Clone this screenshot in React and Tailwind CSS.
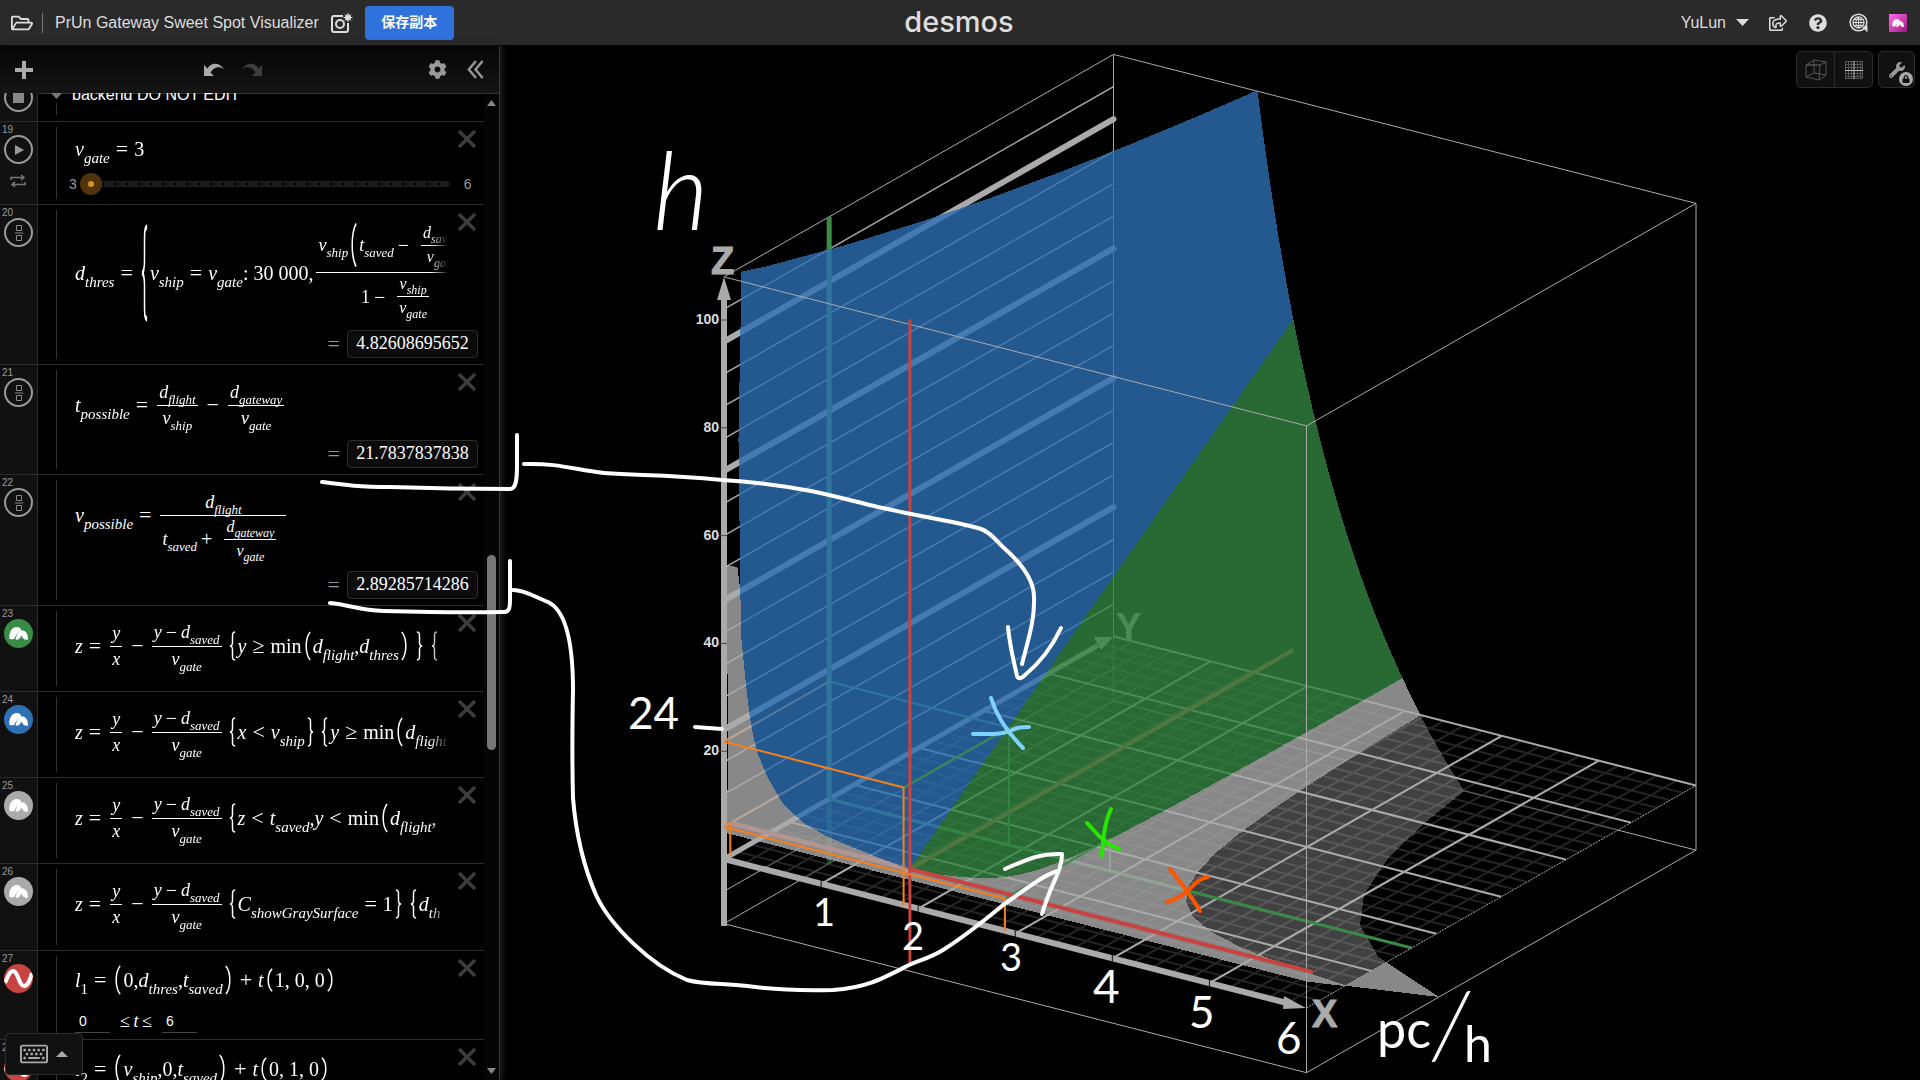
import React from "react";
import { FaRegFolderOpen, FaRegShareSquare, FaQuestionCircle, FaCog, FaRegKeyboard, FaWrench, FaLock } from "react-icons/fa";

/* ---------- math typesetting ---------- */

const SIZES = {
  lg: { main: "text-[20px]", sub: "text-[15px] align-[-7px]" },
  md: { main: "text-[18px]", sub: "text-[13px] align-[-6px]" },
  sm: { main: "text-[16px]", sub: "text-[12px] align-[-5px]" },
};

function V({ v, sub, size = "lg", upright }) {
  return (
    <span className={"whitespace-nowrap leading-none italic " + SIZES[size].main}>
      {v}
      {sub && <span className={"leading-[0] " + (upright ? "not-italic " : "") + SIZES[size].sub}>{sub}</span>}
    </span>
  );
}

function N({ children, size = "lg" }) {
  return <span className={"whitespace-pre leading-none " + SIZES[size].main}>{children}</span>;
}

function Op({ children, size = "lg" }) {
  const s = { lg: "mx-[6px] text-[22px]", md: "mx-1 text-[20px]", sm: "mx-1 text-[18px]" }[size];
  return <span className={"leading-none " + s}>{children}</span>;
}

function Frac({ top, bottom, className = "" }) {
  return (
    <span className={"mx-2 inline-grid grid-rows-[1fr_1px_1fr] justify-items-center " + className}>
      <span className="flex items-center self-end px-[2px] pb-1">{top}</span>
      <span className="w-full bg-white" />
      <span className="flex items-center self-start px-[2px] pt-[3px]">{bottom}</span>
    </span>
  );
}

const DELIMS = {
  "(": "M7 1C1 8 1 24 7 31",
  ")": "M1 1C7 8 7 24 1 31",
  "{": "M7 1C4 1 4 3 4 6V12C4 14 3 16 1 16C3 16 4 18 4 20V26C4 29 4 31 7 31",
  "}": "M1 1C4 1 4 3 4 6V12C4 14 5 16 7 16C5 16 4 18 4 20V26C4 29 4 31 1 31",
};

function Delim({ type, className = "h-[30px]" }) {
  return (
    <svg viewBox="0 0 8 32" preserveAspectRatio="none" className={"mx-[2px] w-[7px] shrink-0 " + className}>
      <path d={DELIMS[type]} fill="none" stroke="#fff" strokeWidth="1.7" />
    </svg>
  );
}

/* ---------- expression list ---------- */

function SurfaceGlyph({ className }) {
  return (
    <svg viewBox="0 0 29 29" className={className}>
      <path d="M5.500 20C4.500 13 8 8 12.500 8C15.500 8 17 9.500 17.500 11.500C14 13 12 16 10.500 19.500C9 20.500 7 20.500 5.500 20Z" fill="#fff" />
      <path d="M12.500 17C14 13 16 11.500 19 11.500C22.500 12 24 16 24 20.500C21 21.500 19 20 17.500 16.500C16 20 13.500 21.500 11.500 20.500Z" fill="#fff" />
    </svg>
  );
}

function RowIcon({ kind }) {
  const base = "flex h-[29px] w-[29px] items-center justify-center overflow-hidden rounded-full ";
  const ring = base + "border-2 border-[#999]";
  if (kind === "folder")
    return <button aria-label="Folder visibility" className={ring}><span className="h-[10px] w-[11px] bg-[#888]" /></button>;
  if (kind === "play")
    return (
      <button aria-label="Play slider" className={ring}>
        <svg viewBox="0 0 10 10" className="ml-[2px] h-[10px] w-[10px]"><path d="M0 0L9 5L0 10Z" fill="#999" /></svg>
      </button>
    );
  if (kind === "frac")
    return (
      <button aria-label="Show as fraction" className={ring}>
        <svg viewBox="0 0 10 18" className="h-[18px] w-[10px]" fill="none" stroke="#888">
          <path d="M2.500 1.500H7.500V6.500H2.500ZM2.500 11.500H7.500V16.500H2.500ZM1 9H9" />
        </svg>
      </button>
    );
  if (kind === "curve")
    return (
      <button aria-label="Toggle curve" className={base + "bg-[#c74440]"}>
        <svg viewBox="0 0 29 29" className="h-[29px] w-[29px]">
          <path d="M1 19C4 12 6 7 9 7C14 7 15 22 20 22C24 22 26 16 28 9" fill="none" stroke="#fff" strokeWidth="4" />
        </svg>
      </button>
    );
  const color = { green: "bg-[#388c46]", blue: "bg-[#2d70b3]", gray: "bg-[#aaaaaa]" }[kind];
  return (
    <button aria-label="Toggle surface" className={base + color}>
      <SurfaceGlyph className="h-[29px] w-[29px]" />
    </button>
  );
}

function Row({ n, icon, height, mathHeight, children, after, gutterExtra }) {
  return (
    <li className={"flex shrink-0 " + height}>
      <div className="flex w-[38px] shrink-0 flex-col border-r border-b border-[#2c2c2c] bg-[#111] pl-1">
        <span className="-ml-[2px] pt-[2px] text-[10px] leading-[11px] text-[#999] [font-family:'Liberation_Sans',Arial,sans-serif]">{n}</span>
        <RowIcon kind={icon} />
        {gutterExtra}
      </div>
      <div className="flex min-w-0 flex-1 border-b border-[#2c2c2c]">
        <div className="ml-[18px] flex py-[5px]"><span className="w-px bg-[#333]" /></div>
        <div className="ml-[18px] flex min-w-0 flex-1 flex-col">
          <div className="flex">
            <div className={"flex w-[372px] items-center whitespace-nowrap [mask-image:linear-gradient(to_right,black_355px,transparent_374px)] " + mathHeight}>
              {children}
            </div>
            <button aria-label="Delete expression" className="mt-2 ml-[11px] h-[18px] w-[18px] shrink-0">
              <svg viewBox="0 0 18 18" className="h-[18px] w-[18px]"><path d="M1 1L17 17M17 1L1 17" stroke="#3d3d3d" strokeWidth="3.400" /></svg>
            </button>
          </div>
          {after}
        </div>
      </div>
    </li>
  );
}

function Result({ value, className = "" }) {
  return (
    <div className={"flex items-center justify-end pr-[6px] " + className}>
      <span className="mr-[7px] text-[22px] leading-none text-[#999]">=</span>
      <output className="h-7 w-[131px] rounded border border-[#2c2c2c] bg-[#0b0b0b] text-center text-[18px] leading-[25px]">{value}</output>
    </div>
  );
}

function SurfaceStart() {
  return (
    <>
      <V v="z" />
      <Op>=</Op>
      <Frac className="mx-[3px]" top={<V v="y" size="md" />} bottom={<V v="x" size="md" />} />
      <Op>−</Op>
      <Frac
        className="mr-[5px] ml-[2px]"
        top={<><V v="y" size="md" /><Op size="md">−</Op><V v="d" sub="saved" size="md" /></>}
        bottom={<V v="v" sub="gate" size="md" />}
      />
    </>
  );
}

function BoundInput({ label, value }) {
  return (
    <input aria-label={label} defaultValue={value} className="h-6 w-[35px] border-b border-[#444] bg-transparent pl-1 text-[14px] leading-none outline-none [font-family:'Liberation_Sans',Arial,sans-serif]" />
  );
}

function ExpressionPanel() {
  return (
    <section className="flex w-[500px] shrink-0 flex-col border-r border-[#3a3a3a] bg-black shadow-[2px_0_6px_#222]">
      <div className="flex h-12 shrink-0 items-center border-b border-[#333] bg-linear-to-b from-[#060606] to-[#151515] pr-[15px] pl-[15px] text-[#999]">
        <button aria-label="Add item">
          <svg viewBox="0 0 18 18" className="h-[18px] w-[18px]"><path d="M9 0V18M0 9H18" stroke="#aaa" strokeWidth="4" /></svg>
        </button>
        <button aria-label="Undo" className="ml-[170px]">
          <svg viewBox="0 0 22 14" className="h-[14px] w-[22px]"><path d="M1 2V13H11L7.500 9.500C11 4 16 3 21 6C16-1 8-1 4.500 5.500Z" fill="#aaa" /></svg>
        </button>
        <button aria-label="Redo" className="ml-4">
          <svg viewBox="0 0 22 14" className="h-[14px] w-[22px]"><path d="M21 2V13H11L14.500 9.500C11 4 6 3 1 6C6-1 14-1 17.500 5.500Z" fill="#3d3d3d" /></svg>
        </button>
        <span className="flex-1" />
        <button aria-label="Settings"><FaCog className="h-[19px] w-[19px]" /></button>
        <button aria-label="Hide list" className="ml-5">
          <svg viewBox="0 0 17 20" className="h-[19px] w-[17px]"><path d="M9 1L1.500 10L9 19M16 1L8.500 10L16 19" fill="none" stroke="#999" strokeWidth="2.500" /></svg>
        </button>
      </div>
      <div className="relative flex min-h-0 flex-1">
        <ul className="-mt-px flex min-h-0 min-w-0 flex-1 flex-col overflow-hidden [font-family:'Liberation_Serif','Times_New_Roman',serif]">
          <li className="-mt-5 flex h-[49px] shrink-0">
            <div className="flex w-[38px] shrink-0 items-start border-r border-b border-[#2c2c2c] bg-[#111] pt-[10px] pl-1"><RowIcon kind="folder" /></div>
            <div className="flex min-w-0 flex-1 items-start border-b border-[#2c2c2c] [font-family:'Liberation_Sans',Arial,sans-serif]">
              <div className="ml-[13px] flex flex-col items-center pt-5">
                <svg viewBox="0 0 11 6" className="h-[6px] w-[11px]"><path d="M0 0H11L5.500 6Z" fill="#777" /></svg>
                <span className="mt-1 h-3 w-px bg-[#333]" />
              </div>
              <span className="ml-[10px] pt-[13px] text-[16px] leading-[18px]">backend DO NOT EDIT</span>
            </div>
          </li>
          <Row
            n="19" icon="play" height="min-h-[83px]" mathHeight="h-[54px]"
            gutterExtra={
              <button aria-label="Loop mode" className="mt-[10px] ml-[6px] w-4">
                <svg viewBox="0 0 16 14" className="h-[14px] w-4" fill="none" stroke="#777" strokeWidth="1.500"><path d="M1 6V3.500H13M11 1L14 3.500L11 6M15 8V10.500H3M5 8L2 10.500L5 13" /></svg>
              </button>
            }
            after={
              <div className="-ml-[6px] flex h-4 items-center text-[14px] leading-none text-[#999] [font-family:'Liberation_Sans',Arial,sans-serif]">
                <span>3</span>
                <label className="relative ml-[3px] flex h-[22px] w-[370px] items-center">
                  <span className="ml-[7px] h-[6px] flex-1 rounded bg-[#1b1b1b] bg-[radial-gradient(circle_at_4px_3px,#000_1px,transparent_2px)] bg-[length:12px_6px]" />
                  <span className="absolute left-0 flex h-[22px] w-[22px] items-center justify-center rounded-full bg-[#4f340c]"><span className="h-[6px] w-[6px] rounded-full bg-[#d98d23]" /></span>
                  <input type="range" aria-label="v gate" min="3" max="6" step="0.1" defaultValue="3" className="absolute inset-0 w-full opacity-0" />
                </label>
                <span className="ml-[14px]">6</span>
              </div>
            }
          >
            <V v="v" sub="gate" /><Op>=</Op><N>3</N>
          </Row>
          <Row n="20" icon="frac" height="min-h-[160px]" mathHeight="h-[135px]" after={<Result value="4.82608695652" className="-mt-[10px]" />}>
            <V v="d" sub="thres" /><Op>=</Op><Delim type="{" className="h-[98px]" />
            <V v="v" sub="ship" /><Op>=</Op><V v="v" sub="gate" /><N>: 30 000,</N>
            <Frac
              className="mx-[3px]"
              top={
                <>
                  <V v="v" sub="ship" size="md" /><Delim type="(" className="h-[46px]" /><V v="t" sub="saved" size="md" /><Op size="md">−</Op>
                  <Frac className="mx-1" top={<V v="d" sub="saved" size="sm" />} bottom={<V v="v" sub="gate" size="sm" />} />
                  <Delim type=")" className="h-[46px]" />
                </>
              }
              bottom={
                <>
                  <N size="md">1</N><Op size="md">−</Op>
                  <Frac className="mx-1" top={<V v="v" sub="ship" size="sm" />} bottom={<V v="v" sub="gate" size="sm" />} />
                </>
              }
            />
          </Row>
          <Row n="21" icon="frac" height="min-h-[110px]" mathHeight="h-20" after={<Result value="21.7837837838" className="-mt-[5px]" />}>
            <V v="t" sub="possible" /><Op>=</Op>
            <Frac className="mx-[3px]" top={<V v="d" sub="flight" size="md" />} bottom={<V v="v" sub="ship" size="md" />} />
            <Op>−</Op>
            <Frac className="mx-[3px]" top={<V v="d" sub="gateway" size="md" />} bottom={<V v="v" sub="gate" size="md" />} />
          </Row>
          <Row n="22" icon="frac" height="min-h-[131px]" mathHeight="h-20 [mask-image:none]" after={<Result value="2.89285714286" className="mt-4" />}>
            <V v="v" sub="possible" /><Op>=</Op>
            <Frac
              className="mx-[3px]"
              top={<V v="d" sub="flight" size="md" />}
              bottom={
                <>
                  <V v="t" sub="saved" size="md" /><Op size="md">+</Op>
                  <Frac className="mx-1" top={<V v="d" sub="gateway" size="sm" />} bottom={<V v="v" sub="gate" size="sm" />} />
                </>
              }
            />
          </Row>
          <Row n="23" icon="green" height="min-h-[86px]" mathHeight="h-20">
            <SurfaceStart /><Delim type="{" /><V v="y" /><Op>≥</Op><N>min</N><Delim type="(" /><V v="d" sub="flight" /><N>,</N><V v="d" sub="thres" /><Delim type=")" /><span className="w-1" /><Delim type="}" /><span className="w-1" /><Delim type="{" />
          </Row>
          <Row n="24" icon="blue" height="min-h-[86px]" mathHeight="h-20">
            <SurfaceStart /><Delim type="{" /><V v="x" /><Op>&lt;</Op><V v="v" sub="ship" /><Delim type="}" /><span className="w-1" /><Delim type="{" /><V v="y" /><Op>≥</Op><N>min</N><Delim type="(" /><V v="d" sub="flight" />
          </Row>
          <Row n="25" icon="gray" height="min-h-[86px]" mathHeight="h-20">
            <SurfaceStart /><Delim type="{" /><V v="z" /><Op>&lt;</Op><V v="t" sub="saved" /><V v="," /><V v="y" /><Op>&lt;</Op><N>min</N><Delim type="(" /><V v="d" sub="flight" /><N>,</N>
          </Row>
          <Row n="26" icon="gray" height="min-h-[87px]" mathHeight="h-20">
            <SurfaceStart /><Delim type="{" /><V v="C" sub="showGraySurface" /><Op>=</Op><N>1</N><Delim type="}" /><span className="w-1" /><Delim type="{" /><V v="d" sub="th" />
          </Row>
          <Row
            n="27" icon="curve" height="min-h-[89px]" mathHeight="h-[58px]"
            after={
              <div className="flex items-center">
                <BoundInput label="Lower bound of t" value="0" />
                <span className="w-[52px] text-center text-[18px] leading-none">≤<i>&thinsp;t&thinsp;</i>≤</span>
                <BoundInput label="Upper bound of t" value="6" />
              </div>
            }
          >
            <V v="l" sub="1" upright /><Op>=</Op><Delim type="(" /><N>0,</N><V v="d" sub="thres" /><N>,</N><V v="t" sub="saved" /><Delim type=")" /><Op>+</Op><V v="t" /><Delim type="(" className="h-[24px]" /><N>1, 0, 0</N><Delim type=")" className="h-[24px]" />
          </Row>
          <Row n="28" icon="curve" height="min-h-[89px]" mathHeight="h-[58px]">
            <V v="l" sub="2" upright /><Op>=</Op><Delim type="(" /><V v="v" sub="ship" /><N>,0,</N><V v="t" sub="saved" /><Delim type=")" /><Op>+</Op><V v="t" /><Delim type="(" className="h-[24px]" /><N>0, 1, 0</N><Delim type=")" className="h-[24px]" />
          </Row>
        </ul>
        <div className="flex w-[15px] shrink-0 flex-col items-center bg-[#050505] py-[6px]">
          <svg viewBox="0 0 9 6" className="h-[6px] w-[9px]"><path d="M0 6H9L4.500 0Z" fill="#888" /></svg>
          <span className="grow-[446] basis-0" />
          <span className="w-[9px] grow-[194] basis-0 rounded-full bg-[#777]" />
          <span className="grow-[316] basis-0" />
          <svg viewBox="0 0 9 6" className="h-[6px] w-[9px]"><path d="M0 0H9L4.500 6Z" fill="#888" /></svg>
        </div>
        <button aria-label="Show keypad" className="absolute bottom-[5px] left-[5px] flex h-[42px] w-[78px] items-center rounded border border-[#2c2c2c] bg-[#111] pl-[14px] text-[#aaa]">
          <FaRegKeyboard className="h-7 w-7" />
          <svg viewBox="0 0 12 6" className="ml-2 h-[6px] w-3"><path d="M0 6H12L6 0Z" fill="#aaa" /></svg>
        </button>
      </div>
    </section>
  );
}

/* ---------- 3D graph ---------- */

const X_MAX = 6, Y_MAX = 300, Z_MIN = -12, Z_MAX = 108;
const SHIP = 1.85, FLIGHT = 81, THRES = 4.826, SAVED = 6, POSSIBLE_T = 21.78, POSSIBLE_V = 2.893;

const project = (x, y, z) => [
  724 + 97.08 * x + 1.2983 * y,
  859 + 24.83 * x - 0.7417 * y - 5.39 * z,
];
const pts = (list) => list.map((p) => p.map((c) => c.toFixed(1)).join(",")).join(" ");
const poly = (...list) => pts(list.map((p) => project(...p)));
const range = (a, b, step) => Array.from({ length: Math.round((b - a) / step) + 1 }, (_, i) => a + i * step);
const zAt = (x, y) => y / x - y / 3 + 5;

/* Points where the surface meets the plane z = c, swept over y. */
const level = (c, ys) => ys.map((y) => project(1 / ((c - 5) / y + 1 / 3), y, c));
const backEdge = (a, b) => range(0, 24, 1).map((i) => { const x = a + ((b - a) * i) / 24; return project(x, Y_MAX, zAt(x, Y_MAX)); });

const YS = [300, 260, 220, 180, 150, 125, 102, 85, 70, 58, 48, 40, 33, 27, 22, 17, 13, 10, 7.5, 6, 4.826];
const frontCurve = [[741, 600], [742, 640], [746, 680], [750, 715], [754, 737], [758, 753], [768, 777], [783, 803], [803, 822], [827, 836], [868, 853], project(SHIP, THRES, SAVED)];

const blueSurface = pts([
  ...level(Z_MAX, [20, 60, 100, 140, 180, 220, 260, 300]),
  ...backEdge(1.478, SHIP),
  ...[...frontCurve].reverse(),
  [739, 440], [742, 272],
]);
const greenSurface = pts([...backEdge(SHIP, 2.97), ...level(SAVED, YS)]);
const grayUpper = pts([
  ...backEdge(2.97, 3.158),
  ...level(0, YS.filter((y) => y >= 33)),
  project(6, 30, 0), project(6, 0, 5), project(0, 0, 5), [729, 780], [727, 565], [737, 568],
  ...frontCurve,
  ...level(SAVED, [...YS].reverse()),
]);
const grayLower = pts([
  ...backEdge(3.158, 3.614),
  ...level(Z_MIN, YS.filter((y) => y >= 102)),
  project(6, 30, 0),
  ...level(0, YS.filter((y) => y >= 33).reverse()),
]);

function Line({ p, c = "#aaa", w = 1, ...rest }) {
  return <polyline points={poly(...p)} fill="none" stroke={c} strokeWidth={w} {...rest} />;
}

function Graph() {
  return (
    <svg viewBox="500 46 1420 1034" preserveAspectRatio="xMinYMin meet" className="block h-full w-full" role="img" aria-label="3D surface plot">
      <Line p={[[0, 0, Z_MIN], [0, Y_MAX, Z_MIN], [X_MAX, Y_MAX, Z_MIN]]} />
      <Line p={[[0, Y_MAX, Z_MIN], [0, Y_MAX, 0]]} />
      <Line p={[[0, 0, -6], [0, Y_MAX, -6]]} />
      <polygon points={grayLower} fill="#888" shapeRendering="crispEdges" />
      <Line p={[[0, FLIGHT, Z_MIN], [0, FLIGHT, 0]]} c="#388c46" w={5} />

      <polygon points={poly([0, 0, 0], [6, 0, 0], [6, 300, 0], [0, 300, 0])} fill="#000" opacity="0.52" />

      <g opacity="0.22">
        {range(0.2, 5.8, 0.2).map((x) => <Line key={x} p={[[x, 0, 0], [x, 300, 0]]} w={2} />)}
        {range(10, 290, 10).map((y) => <Line key={y} p={[[0, y, 0], [6, y, 0]]} w={2} />)}
      </g>
      {range(1, 5, 1).map((x) => <Line key={x} p={[[x, 0, 0], [x, 300, 0]]} w={2} />)}
      {range(50, 300, 50).map((y) => <Line key={y} p={[[0, y, 0], [6, y, 0]]} w={2} />)}

      <Line p={[[0, 0, Z_MAX], [0, Y_MAX, Z_MAX], [X_MAX, Y_MAX, Z_MAX]]} />
      <Line p={[[0, Y_MAX, 0], [0, Y_MAX, Z_MAX]]} />
      {range(6, 102, 6).map((z) => <Line key={z} p={[[0, 0, z], [0, Y_MAX, z]]} w={z % 24 === 0 ? 6 : 1.5} strokeLinecap="round" />)}
      <Line p={[[0, 0, 0], [0, 288, 0]]} w={5} />
      <path d="M1113 637L1101 650L1094 637Z" fill="#aaa" />
      <text x="1116" y="640" className="text-[38px] font-bold [font-family:'Liberation_Sans',Arial,sans-serif]" fill="#aaa">Y</text>

      <Line p={[[0, FLIGHT, 0], [0, FLIGHT, Z_MAX]]} c="#388c46" w={5} />
      <Line p={[[0, FLIGHT, 0], [X_MAX, FLIGHT, 0]]} c="#388c46" w={3} />
      <Line p={[[0, FLIGHT, POSSIBLE_T], [SHIP, FLIGHT, POSSIBLE_T], [SHIP, FLIGHT, 0]]} c="#388c46" w={2} />
      <Line p={[[0, 0, POSSIBLE_T], [0, FLIGHT, POSSIBLE_T]]} c="#fa9c5a" w={2} />
      <Line p={[[0, THRES, SAVED], [0, FLIGHT, SAVED]]} c="#fa9c5a" w={2} />
      <Line p={[[POSSIBLE_V, FLIGHT, SAVED], [POSSIBLE_V, FLIGHT, 0]]} c="#388c46" w={2} />
      <Line p={[[0, THRES, SAVED], [SHIP, THRES, SAVED]]} c="#c74440" w={5} />
      <Line p={[[SHIP, 0, SAVED], [SHIP, Y_MAX, SAVED]]} c="#c74440" w={4} />

      <g opacity="0.8" shapeRendering="crispEdges">
        <polygon points={grayUpper} fill="#aaa" stroke="#aaa" />
        <polygon points={blueSurface} fill="#2d70b3" stroke="#2d70b3" />
        <polygon points={greenSurface} fill="#348442" stroke="#348442" />
      </g>

      <Line p={[[SHIP, FLIGHT, POSSIBLE_T], [SHIP, 0, POSSIBLE_T]]} c="#388c46" w={2} />
      <Line p={[[POSSIBLE_V, FLIGHT, SAVED], [POSSIBLE_V, 0, SAVED]]} c="#388c46" w={2} />

      <Line p={[[X_MAX, 0, 0], [X_MAX, Y_MAX, 0]]} strokeDasharray="2 1" />
      <Line p={[[0, 0, Z_MIN], [X_MAX, 0, Z_MIN], [X_MAX, Y_MAX, Z_MIN], [X_MAX, Y_MAX, Z_MAX], [X_MAX, 0, Z_MAX], [0, 0, Z_MAX]]} />
      <Line p={[[X_MAX, 0, Z_MIN], [X_MAX, 0, Z_MAX]]} />

      <Line p={[[0, 0, 0], [5.8, 0, 0]]} w={6} />
      <path d="M1306 1008L1283 1009L1284 996Z" fill="#aaa" />
      {range(1, 5, 1).map((x) => { const [sx, sy] = project(x, 0, 0); return <path key={x} d={"M" + sx + " " + (sy - 4) + "v8"} stroke="#111" />; })}
      <path d="M724 926V296" stroke="#aaa" strokeWidth="6" />
      <path d="M724 277L731 300H717Z" fill="#aaa" />

      <Line p={[[SHIP, THRES, SAVED], [X_MAX, THRES, SAVED]]} c="#c74440" w={4} />
      <Line p={[[SHIP, THRES, Z_MIN], [SHIP, THRES, Z_MAX]]} c="#c74440" w={3} />
      <g strokeWidth="2" fill="none" stroke="#fa7e19">
        <polyline points={poly([0, 0, POSSIBLE_T], [SHIP, 0, POSSIBLE_T], [SHIP, 0, 0])} />
        <polyline points={poly([0, 0, SAVED], [POSSIBLE_V, 0, SAVED], [POSSIBLE_V, 0, 0])} />
        <polyline points={poly([0, THRES, SAVED], [0, THRES, 0])} />
        <path d="M726 739H729V743H726ZM726 823H731V828H726Z" strokeWidth="1" />
      </g>

      {[20, 40, 60, 80, 100].map((z) => {
        const y = project(0, 0, z)[1];
        return (
          <g key={z}>
            <path d={"M718 " + y + "h9"} stroke="#444" />
            <text x="719" y={y + 4} textAnchor="end" fill="#ddd" className="text-[14px] font-bold [font-family:'Liberation_Sans',Arial,sans-serif]">{z}</text>
          </g>
        );
      })}
      <g fill="#aaa" stroke="#aaa" className="text-[38px] font-bold [font-family:'Liberation_Sans',Arial,sans-serif]">
        <text x="711" y="274">Z</text>
        <text x="1312" y="1027">X</text>
      </g>
    </svg>
  );
}

/* Freehand pen marks over the list and the graph. */
function PenMarks() {
  return (
    <svg viewBox="0 0 1920 1080" preserveAspectRatio="xMinYMin meet" className="pointer-events-none absolute inset-0 h-full w-full">
      <g fill="none" stroke="#fff" strokeWidth="4" strokeLinecap="round" strokeLinejoin="round">
        <path d="M517 435V466C517 480 516 489 510 489C470 489 420 488 390 487C360 487 345 485 322 482" />
        <path d="M524 464C560 463 575 470 604 473C640 476 660 474 722 480C760 482 785 486 811 491C840 497 860 503 874 506C920 517 960 522 981 529C992 533 995 540 1004 548C1020 562 1034 580 1034 597C1035 620 1028 640 1022 664" />
        <path d="M1008 627C1010 648 1014 662 1017 676Q1019 681 1025 675C1042 661 1053 645 1061 628" />
        <path d="M510 561V600C510 609 509 612 503 612C460 613 420 612 383 611C360 610 350 605 330 603" />
        <path d="M513 590C525 590 535 597 548 602C565 610 573 640 573 690C572 740 572 760 573 798C576 835 583 865 596 895C610 925 650 965 687 980C705 985 725 983 747 986C775 990 800 991 833 990C865 988 880 980 907 966C920 960 930 958 943 950C965 936 985 920 1003 905C1025 890 1040 877 1057 871" />
        <path d="M1005 869C1030 858 1042 853 1062 854C1062 872 1052 880 1042 914" />
        <path d="M695 727L722 729" />
        <path stroke="#7ed2ff" d="M991 698C997 718 1008 733 1023 748M973 734C990 734 1000 735 1010 731C1018 727 1022 727 1029 727" />
        <path stroke="#27e600" d="M1111 809C1104 824 1103 840 1102 856M1087 823C1098 835 1105 844 1119 849" />
        <path stroke="#ff5500" d="M1170 869C1182 884 1192 897 1200 911M1167 902C1190 896 1192 880 1208 877" />
      </g>
      <g fill="#fff" className="text-[38px] [font-family:Lato,sans-serif]">
        <text x="653" y="230" className="text-[108px] font-light italic">h</text>
        <text x="628" y="729" className="text-[44px]">24</text>
        <text x="813" y="926">1</text>
        <text x="902" y="950">2</text>
        <text x="1000" y="971">3</text>
        <text x="1093" y="1003" className="text-[46px]">4</text>
        <text x="1189" y="1028" className="text-[44px]">5</text>
        <text x="1276" y="1054" className="text-[44px]">6</text>
        <text x="1377" y="1048" className="text-[52px]">pc</text>
        <text x="1432" y="1058" className="text-[92px] font-light italic">/</text>
        <text x="1464" y="1062" className="text-[50px]">h</text>
      </g>
    </svg>
  );
}

/* ---------- header and graph tools ---------- */

function Header() {
  return (
    <header className="flex h-[46px] shrink-0 items-center border-b border-black bg-[#2a2a2a] pr-[13px] pl-[11px] text-[#ddd]">
      <div className="flex flex-1 items-center">
        <button aria-label="Open graph"><FaRegFolderOpen className="h-[22px] w-[22px]" /></button>
        <span className="ml-[9px] h-5 w-px bg-[#777]" />
        <h1 className="ml-3 text-[16px] leading-none whitespace-nowrap">PrUn Gateway Sweet Spot Visualizer</h1>
        <button aria-label="Edit thumbnail" className="ml-3">
          <svg viewBox="0 0 22 20" className="h-5 w-[22px]" fill="none" stroke="#ddd" strokeWidth="2">
            <path d="M12 3H3Q1 3 1 5V17Q1 19 3 19H15Q17 19 17 17V10" />
            <circle cx="9" cy="11" r="4" />
            <circle cx="17" cy="4.500" r="3" fill="#ddd" stroke="none" />
            <path d="M17 0V9M12.500 4.500H21.500M14 1.500L20 7.500M20 1.500L14 7.500" strokeWidth="1" />
          </svg>
        </button>
        <button className="ml-3 h-[34px] w-[89px] rounded bg-[#2f72dc] text-[14px] font-bold text-white [font-family:'Liberation_Sans','Noto_Sans_CJK_SC',sans-serif]">保存副本</button>
      </div>
      <div className="pb-[3px] text-[29px] leading-none font-medium [font-family:'Inter',sans-serif]">desmos</div>
      <div className="flex flex-1 items-center justify-end">
        <button className="flex items-center text-[16px]">
          YuLun
          <svg viewBox="0 0 13 7" className="ml-[10px] h-[7px] w-[13px]"><path d="M0 0H13L6.500 7Z" fill="#ddd" /></svg>
        </button>
        <button aria-label="Share" className="ml-5"><FaRegShareSquare className="h-[18px] w-[18px]" /></button>
        <button aria-label="Help" className="ml-[22px]"><FaQuestionCircle className="h-[18px] w-[18px]" /></button>
        <button aria-label="Language" className="ml-[22px]">
          <svg viewBox="0 0 19 19" className="h-[19px] w-[19px]" fill="none" stroke="#ddd">
            <path d="M14 14.500L18 18.500V12.500Z" fill="#ddd" />
            <circle cx="9.500" cy="9.500" r="8.300" strokeWidth="1.600" />
            <circle cx="9.500" cy="9.500" r="5.500" strokeWidth="1.300" />
            <path d="M9.500 4V15M4 9.500H15M5 6.500H14M5 12.500H14M9.500 4C6 7 6 12 9.500 15C13 12 13 7 9.500 4" />
          </svg>
        </button>
        <button aria-label="Desmos 3D" className="ml-[21px] h-[18px] w-[18px] bg-linear-to-br from-[#ff6bf0] to-[#a0107f]"><SurfaceGlyph className="h-[18px] w-[18px]" /></button>
      </div>
    </header>
  );
}

function GraphTools() {
  return (
    <div className="absolute top-[5px] right-[5px] flex h-[37px] gap-[5px]">
      <div className="flex rounded-[5px] border border-[#2c2c2c] bg-[#111]">
        <button aria-label="Reset orientation" className="flex w-[38px] items-center justify-center border-r border-[#2c2c2c]">
          <svg viewBox="0 0 22 22" className="h-[22px] w-[22px]" fill="none" stroke="#555"><path d="M1 6L9 1L21 3L15 6ZM1 6L1 18L14 21L15 6ZM21 3V16L14 21M9 1V14L21 16M9 14L1 18" /></svg>
        </button>
        <button aria-label="Toggle plane" className="flex w-[37px] items-center justify-center">
          <svg viewBox="0 0 18 18" className="h-[18px] w-[18px]" fill="none"><path d="M0.500 0.500H17.500V17.500H0.500ZM0 3.500H18M0 6.500H18M0 12.500H18M0 15.500H18M3.500 0V18M6.500 0V18M12.500 0V18M15.500 0V18" stroke="#555" /><path d="M9 0V18M0 9.500H18" stroke="#bbb" /></svg>
        </button>
      </div>
      <button aria-label="Graph settings" className="relative flex w-[37px] items-center rounded-[5px] border border-[#2c2c2c] bg-[#111] pl-[10px]">
        <FaWrench className="h-4 w-4 text-[#999]" />
        <span className="absolute right-px bottom-px flex h-[14px] w-[14px] items-center justify-center rounded-full bg-[#aaa] text-[#111]"><FaLock className="h-2 w-2" /></span>
      </button>
    </div>
  );
}

export default function App() {
  return (
    <div className="relative flex h-screen flex-col overflow-hidden bg-black text-white [font-family:'Liberation_Sans',Arial,sans-serif]">
      <Header />
      <main className="flex min-h-0 flex-1">
        <ExpressionPanel />
        <div className="relative min-w-0 flex-1">
          <Graph />
          <GraphTools />
        </div>
      </main>
      <PenMarks />
    </div>
  );
}
